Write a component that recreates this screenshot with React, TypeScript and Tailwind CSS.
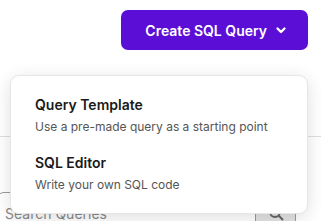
import React from 'react';

const ChevronDown: React.FC = () => (
    <svg width="12" height="12" viewBox="0 0 12 12" fill="none" stroke="currentColor" strokeWidth="2.4" strokeLinecap="round" strokeLinejoin="round">
        <path d="M2.5 4.5 6 8l3.5-3.5" />
    </svg>
);

const SearchIcon: React.FC = () => (
    <svg width="16" height="16" viewBox="0 0 16 16" fill="none" stroke="currentColor" strokeWidth="2" strokeLinecap="round">
        <circle cx="7" cy="7" r="5" />
        <path d="m11 11 3.5 3.5" />
    </svg>
);

const options = [
    { title: 'Query Template', description: 'Use a pre-made query as a starting point' },
    { title: 'SQL Editor', description: 'Write your own SQL code' },
];

export default function App() {
    return (
        <div className="relative w-[321px] h-[221px] overflow-hidden bg-white" style={{ fontFamily: 'Inter, "Noto Sans", sans-serif' }}>
            <div className="flex justify-end pt-[10px] pr-[13px]">
                <button className="flex items-center gap-[8px] h-[40px] pl-[24px] pr-[21px] rounded-[7px] bg-[#5a0ed6] text-white text-[14px] font-semibold">
                    <span>Create SQL Query</span>
                    <ChevronDown />
                </button>
            </div>

            <div className="mt-[86px] border-t border-[#dedede]" />

            <div className="mt-[55px] ml-[-4px] mr-[25px] flex h-[42px] rounded-[8px] border border-[#9a9a9a] overflow-hidden">
                <input className="flex-1 min-w-0 pl-[8px] text-[14px] text-[#333] placeholder:text-[#8a8a8a] focus:outline-none" placeholder="Search Queries" />
                <div className="w-[40px] flex items-center justify-center bg-[#e3e3e3] text-[#666] border-l border-[#9a9a9a]">
                    <SearchIcon />
                </div>
            </div>

            <div className="absolute left-[10px] top-[75px] w-[298px] rounded-[9px] border border-[#e6e6e6] bg-white shadow-[0_4px_18px_rgba(0,0,0,0.13)] pt-[19px] pb-[19px]">
                {options.map((opt, i) => (
                    <div key={opt.title} className={`px-[24px] ${i > 0 ? 'mt-[17px]' : ''}`}>
                        <div className="text-[14px] leading-[20px] font-semibold text-[#1a1a1a]">{opt.title}</div>
                        <div className="mt-[3px] text-[12px] leading-[18px] text-[#555]">{opt.description}</div>
                    </div>
                ))}
            </div>
        </div>
    );
}
